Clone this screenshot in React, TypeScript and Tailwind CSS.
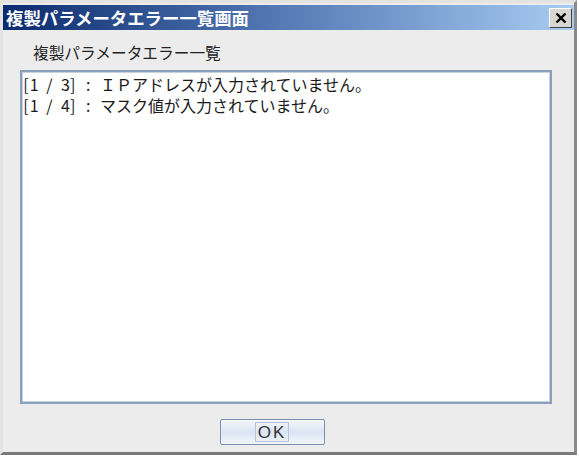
import React from "react";

const jp = { fontFamily: '"Noto Sans CJK JP", "Noto Sans", sans-serif' };

function Mono({ text }: { text: string }) {
  return (
    <>
      {text.split("").map((c, i) => (
        <span key={i} className="inline-block w-[7.8px] leading-[18px] text-center align-middle">
          {c === " " ? "\u00a0" : c}
        </span>
      ))}
    </>
  );
}

export default function App() {
  const rows = [
    { p: "[1 / 3] : ", t: "ＩＰアドレスが入力されていません。" },
    { p: "[1 / 4] : ", t: "マスク値が入力されていません。" },
  ];
  return (
    <div className="w-[579px] h-[459px] bg-white" style={jp}>
      <div className="w-[577px] h-[455px] flex flex-col bg-[#ececec] border-l-[3px] border-t-[3px] border-r-[3px] border-b-[3px] border-l-[#e4e3e0] border-t-[#e4e3e0] border-r-[#8a8a8a] border-b-[#7a7a7a]">
        <div className="mt-[2px] mx-0 h-[25px] flex items-center justify-between bg-gradient-to-r from-[#0c2a6e] via-[#4f74b0] via-45% to-[#a9ccf2] pl-[3px] pr-[2px]">
          <span className="text-white font-bold text-[17.4px] leading-none">
            複製パラメータエラー一覧画面
          </span>
          <div className="w-[23px] h-[20px] bg-[#d8d6d0] border border-t-white border-l-white border-r-[#404040] border-b-[#404040] flex items-center justify-center">
            <svg width="12" height="10" viewBox="0 0 12 10">
              <path d="M1.5 0.5 L10.5 9.5 M10.5 0.5 L1.5 9.5" stroke="#000" strokeWidth="2.4" />
            </svg>
          </div>
        </div>
        <div className="pl-[30px] pt-[13px] h-[40px] text-[15.7px] leading-[20px] text-[#222]">
          複製パラメータエラー一覧
        </div>
        <div className="ml-[17px] w-[532px] h-[334px] bg-white border-2 border-[#8aa0b8] outline outline-1 outline-[#c8d2dc] -outline-offset-[3px] pt-[1px]">
          {rows.map((r, i) => (
            <div key={i} className="h-[21px] flex items-center text-[16px] text-[#1a1a1a] whitespace-nowrap">
              <Mono text={r.p} />
              <span className="leading-[18px]">{r.t}</span>
            </div>
          ))}
        </div>
        <div className="flex justify-center pt-[15px] pr-[33px]">
          <div className="w-[105px] h-[26px] rounded-[2px] border border-[#7f90ad] bg-gradient-to-b from-[#f4f7fb] via-[#dbe6f3] to-[#f1f5fa] flex items-center justify-center">
            <span className="px-[2px] h-[20px] leading-[20px] border border-[#b3c4dc] text-[17px] text-[#333] tracking-[2px]" style={{ fontFamily: '"Liberation Sans", sans-serif' }}>
              OK
            </span>
          </div>
        </div>
      </div>
    </div>
  );
}
